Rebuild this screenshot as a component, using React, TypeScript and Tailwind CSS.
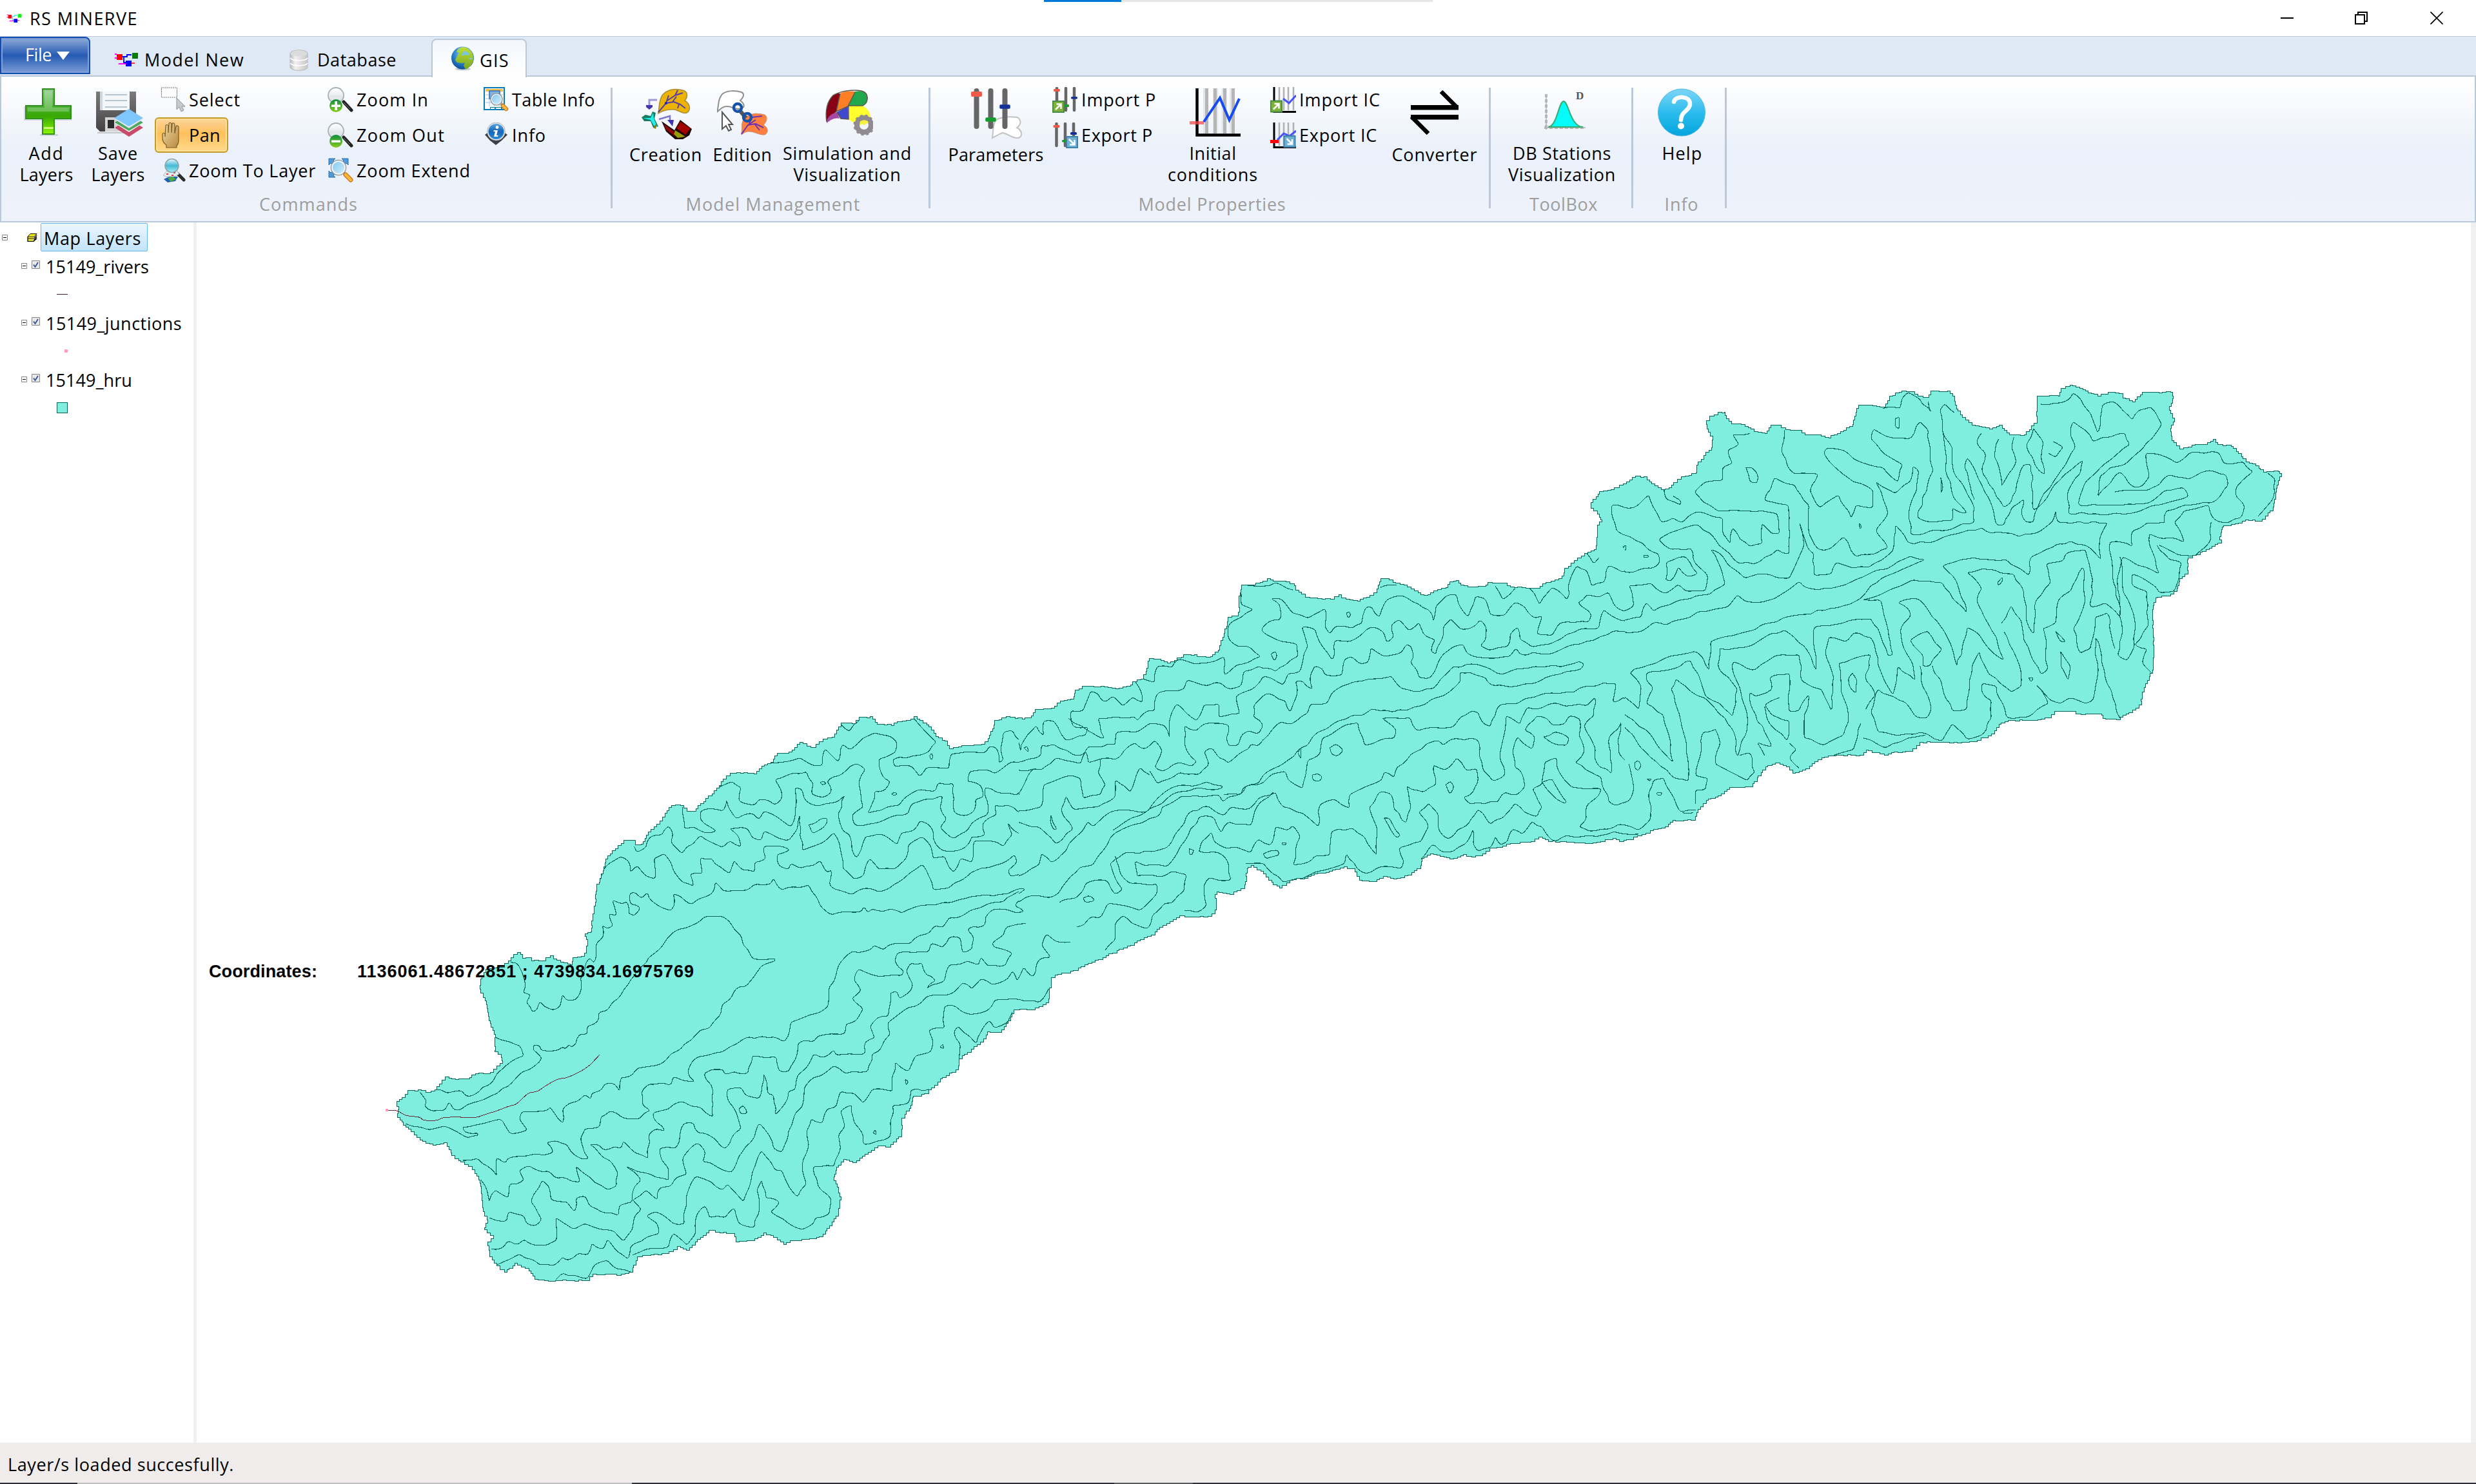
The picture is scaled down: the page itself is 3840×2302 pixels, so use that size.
import React, { useLayoutEffect, useRef } from "react";

/* ------------------------------------------------------------------ */
/* Text that is tracked to an exact advance width                      */
/* ------------------------------------------------------------------ */

function Fit({ w, children, className = "" }: { w: number; children: string; className?: string }) {
  const ref = useRef<HTMLSpanElement>(null);
  useLayoutEffect(() => {
    const el = ref.current;
    if (!el) return;
    el.style.letterSpacing = "0px";
    const natural = el.getBoundingClientRect().width;
    el.style.letterSpacing = `${(w - natural) / children.length}px`;
  }, [w, children]);
  return (
    <span ref={ref} className={`inline-block whitespace-pre ${className}`}>
      {children}
    </span>
  );
}

/* ------------------------------------------------------------------ */
/* Map geometry                                                        */
/* ------------------------------------------------------------------ */

type Pt = [number, number];
type Sheet = { ox: number; oy: number; sx: number; sy: number };

const WEST: Sheet = { ox: 560, oy: 1050, sx: 0.70153, sy: 0.61224 };
const MID: Sheet = { ox: 1500, oy: 850, sx: 0.76531, sy: 0.38265 };
const EAST: Sheet = { ox: 2400, oy: 560, sx: 0.76531, sy: 0.44643 };

function read(sheet: Sheet, text: string): Pt[] {
  return text
    .trim()
    .split(/\s+/)
    .map((pair) => {
      const [x, y] = pair.split(",").map(Number);
      return [sheet.ox + x * sheet.sx, sheet.oy + y * sheet.sy] as Pt;
    });
}

function noise(a: number, b: number) {
  const v = Math.sin(a * 12.9898 + b * 78.233) * 43758.5453;
  return v - Math.floor(v) - 0.5;
}

function roughen(pts: Pt[]): Pt[] {
  const out: Pt[] = [pts[0]];
  for (let i = 1; i < pts.length; i++) {
    const [x0, y0] = pts[i - 1];
    const [x1, y1] = pts[i];
    const len = Math.hypot(x1 - x0, y1 - y0);
    const n = Math.max(1, Math.round(len / 11));
    for (let k = 1; k < n; k++) {
      const t = k / n;
      const d = noise(x0 + k * 3, y1 + k) * 5;
      out.push([x0 + (x1 - x0) * t - ((y1 - y0) / len) * d, y0 + (y1 - y0) * t + ((x1 - x0) / len) * d]);
    }
    out.push([x1, y1]);
  }
  return out;
}

function curve(pts: Pt[]): string {
  const f = (n: number) => n.toFixed(1);
  let d = `M${f(pts[0][0])} ${f(pts[0][1])}`;
  for (let i = 1; i < pts.length - 1; i++) {
    const [px, py] = pts[i - 1];
    const [x, y] = pts[i];
    const [nx, ny] = pts[i + 1];
    const ax = x + (px - x) * 0.4;
    const ay = y + (py - y) * 0.4;
    const bx = x + (nx - x) * 0.4;
    const by = y + (ny - y) * 0.4;
    d += `L${f(ax)} ${f(ay)}Q${f(x)} ${f(y)} ${f(bx)} ${f(by)}`;
  }
  const last = pts[pts.length - 1];
  return `${d}L${f(last[0])} ${f(last[1])}`;
}

function stairs(pts: Pt[]): string {
  let d = `M${Math.round(pts[0][0])} ${Math.round(pts[0][1])}`;
  const all = [...pts, pts[0]];
  for (let i = 1; i < all.length; i++) {
    const [x0, y0] = all[i - 1];
    const [x1, y1] = all[i];
    const n = Math.max(1, Math.round(Math.hypot(x1 - x0, y1 - y0) / 6));
    for (let k = 1; k <= n; k++) {
      const j = k < n ? noise(x0 + k, y0) * 2 : 0;
      d += `H${Math.round(x0 + ((x1 - x0) * k) / n + j)}V${Math.round(y0 + ((y1 - y0) * k) / n + j)}`;
    }
  }
  return `${d}Z`;
}

const OUTLINE: [Sheet, string][] = [
  [WEST, "80,1105 82,1088 78,1075 90,1065 103,1047 125,1046 143,1052 163,1045 172,1030 185,1012 200,1018 232,1018 252,1005 285,1002 300,985 312,972 310,955 295,945 297,905 285,870 278,830 270,800 264,790 263,765 275,740 310,735 325,718 345,698 352,703 357,712 372,710 376,718 400,718 418,706 425,714 440,722 462,728 468,710 486,708 498,690 500,665 495,650 508,645 512,600 518,570 520,525 528,510 535,490 540,460 555,440 580,414 600,414 606,424 618,423 630,400 640,385 660,365 672,345 685,325 705,325 720,340 735,340 750,320 780,288 800,258 815,243 845,242 868,245 885,225 905,215 920,192 945,190 970,165 985,175 1000,178 1020,156 1040,152 1060,116 1085,118 1100,102 1125,100 1140,120 1172,122 1185,112 1205,110 1222,100 1235,110 1255,125 1270,150 1290,162 1300,182 1320,176 1372,170 1385,155 1395,130 1400,110 1425,100 1445,105 1475,103 1490,82 1525,78 1545,60 1568,55"],
  [MID, "215,600 218,575 232,560 270,560 300,570 330,555 335,540 352,530 362,500 368,446 385,450 405,464 420,455 438,432 460,432 465,440 492,440 508,412 514,375 520,345 528,280 545,275 552,240 550,210 555,150 580,150 598,132 608,122 620,132 645,135 662,152 665,170 685,198 710,205 735,207 752,188 758,202 790,215 815,190 830,165 838,122 855,128 868,142 885,150 905,172 925,192 945,172 970,160 978,135 990,130 1000,150 1020,158 1045,155 1055,138 1085,142 1100,158 1155,162 1165,145 1190,128 1205,112 1210,80 1230,50 1250,20 1270,5"],
  [EAST, "98,640 100,600 100,570 110,550 100,520 88,505 88,490 98,470 105,452 135,440 145,430 160,418 178,398 195,402 210,425 230,445 245,440 255,420 270,402 300,388 305,350 320,315 332,300 335,260 325,235 322,205 328,190 345,178 358,178 362,200 372,218 392,220 412,235 418,245 440,250 452,222 465,222 482,238 508,240 522,256 545,255 570,266 580,255 600,240 618,220 622,190 630,152 650,152 680,160 692,122 718,102 735,106 750,122 768,126 776,103 810,103 825,130 828,165 840,195 860,222 895,235 915,222 925,240 935,255 965,256 980,225 992,205 992,120 1035,120 1040,95 1058,83 1085,98 1095,110 1115,120 1135,108 1158,112 1165,128 1185,142 1205,108 1262,108 1268,130 1260,170 1270,210 1262,245 1265,275 1280,305 1305,292 1330,288 1348,270 1358,290 1385,295 1400,320 1415,350 1435,362 1450,385 1480,382 1487,400 1480,430 1475,480 1470,520 1448,555 1420,550 1400,565 1370,575 1362,620 1365,632 1340,655 1315,675 1298,690 1297,740 1280,765 1275,800 1262,815 1235,822 1228,850 1225,900 1228,1000 1225,1085 1215,1120 1205,1160 1203,1195 1185,1220 1160,1245 1130,1240 1122,1225 1080,1225 1070,1216 1035,1217 1020,1238 1000,1246 940,1248 918,1260 905,1295 870,1322 830,1324 760,1324 740,1355 710,1358 690,1368 650,1350 640,1368 575,1370 555,1385 530,1415 502,1432 490,1410 470,1395 445,1408 432,1440 415,1478 375,1480 345,1515 325,1525 305,1568"],
  [MID, "1475,1103 1435,1103 1420,1130 1400,1140 1375,1160 1350,1180 1330,1190 1315,1175 1275,1195 1245,1195 1185,1188 1165,1170 1150,1190 1120,1197 1100,1200 1085,1212 1065,1215 1050,1240 1030,1253 1012,1242 985,1260 965,1250 945,1240 925,1258 918,1300 900,1325 870,1340 850,1330 830,1352 800,1345 785,1300 770,1292 740,1310 710,1320 690,1338 660,1345 638,1376 620,1355 600,1310 580,1285 568,1300 562,1380 540,1403 510,1392 502,1420 505,1465 495,1492 455,1496 435,1490 410,1520 390,1545 380,1568"],
  [WEST, "1568,750 1540,755 1525,765 1520,825 1490,842 1445,842 1435,870 1415,900 1390,898 1375,925 1340,955 1322,972 1320,995 1285,1018 1255,1055 1220,1065 1212,1100 1195,1125 1195,1165 1170,1190 1150,1188 1120,1208 1095,1230 1072,1222 1050,1250 1045,1275 1055,1300 1060,1325 1055,1365 1040,1390 1020,1418 990,1425 955,1428 940,1437 920,1420 895,1408 870,1428 835,1430 825,1410 775,1402 750,1425 725,1452 705,1443 680,1460 640,1465 612,1468 600,1508 575,1515 520,1512 505,1528 420,1530 390,1525 370,1498 345,1485 322,1508 300,1485 283,1460 280,1430 292,1415 272,1395 280,1375 270,1345 265,1290 260,1265 245,1240 220,1225 200,1205 190,1180 165,1185 135,1172 110,1145 98,1135 85,1115"],
];

const WEST_LINES = [
  "295,912 310,920 330,925 352,935 360,960 335,972 320,985 300,1005 292,1025 268,1040 262,1050 245,1062 232,1062 222,1048 205,1050 190,1055 175,1045 160,1047",
  "130,1052 145,1075 140,1088 155,1100 185,1098 195,1076 205,1097 220,1097 250,1078 270,1072 290,1060 325,1038 340,1020 358,1000 372,995 385,985 400,968 392,955 380,945 382,932 395,935 398,946 435,946 445,938 452,942 460,932 465,938 475,930 485,905 500,905 500,885 525,870 525,850 545,845 555,825 575,805 590,780 605,755 630,725 635,712 660,690 675,665 700,640 735,628 760,607 800,607 815,620 825,640 840,655 845,680 855,690 865,714 915,714 915,720 900,725 885,732 865,765 850,785 835,785 820,810 798,830 795,855 770,890 750,895 730,920 705,945 685,955 675,970 650,985 610,992 600,1008 575,1015 572,1050 560,1030 540,1030 530,1048 510,1055 508,1070 495,1058 480,1075 460,1080 445,1095 447,1130 430,1110 418,1090 412,1098 355,1102 350,1120 368,1148 350,1155 330,1158 320,1140 310,1120 290,1125 270,1132 250,1136 225,1140 228,1152 258,1156 258,1162 235,1168 220,1158 205,1148 185,1138 150,1148 130,1140 98,1132",
  "330,723 345,725 355,745 362,770 358,800 375,805 365,825 378,848 388,845 395,822 405,835 425,845 440,835 445,805 455,820 475,818 488,785 485,760 505,712 515,725 520,690 520,675 535,660 533,630 545,638 557,630 548,600 565,605 555,565 575,575 588,570 592,600 605,605 618,585 595,575 593,550 605,545 620,562 633,546 645,570 660,582 685,592 692,580 690,550 705,555 730,577 745,563 775,550 783,520 800,542 855,540 870,525 905,525 912,510 930,540 955,532 990,527 1005,555 1015,580 1040,603 1055,597 1105,595 1112,582 1120,597 1130,588 1140,592 1185,592 1195,598 1220,585 1270,578 1320,565 1365,555 1430,550 1450,537 1465,540 1440,553 1420,570 1385,575 1350,590 1330,605 1300,610 1285,635 1268,630 1255,650 1235,655 1215,675 1165,680 1155,692 1135,680 1115,695 1085,695 1070,710 1055,730 1050,755 1035,785 1032,835 1010,852 980,862 950,875 948,892 935,925 915,912 855,912 830,930 800,950 760,960 735,970 727,985 725,1012 738,1025 710,1022 690,1012 685,1035 665,1028 635,1032 620,1050 622,1085 640,1098 615,1120 590,1120 565,1105 550,1100 530,1115 528,1140 495,1145 485,1170 490,1190 503,1220 490,1222 465,1205 455,1185 430,1175 410,1180 425,1205 405,1212 385,1208 350,1215 325,1220 318,1232 300,1218 300,1265 280,1240 258,1220 225,1225",
  "265,1275 275,1290 283,1330 297,1300 325,1320 328,1285 345,1285 360,1275 350,1250 370,1238 385,1248 415,1252 430,1270 450,1268 465,1278 485,1280 475,1240 495,1260 515,1280 545,1300 565,1290 568,1258 550,1225 525,1205 505,1185 525,1185 535,1198 560,1190 575,1195 580,1175 595,1195 635,1220 635,1160 650,1145 672,1150 655,1130 645,1105 680,1095 690,1083 710,1075 730,1088 750,1090 778,1115 778,1050 758,1005 775,995 800,995 805,1008 825,1000 835,1005 855,1005 865,960 895,965 918,962 925,1000 945,1000 960,970 965,930 980,920 1000,925 1010,910 1050,905 1070,905 1072,880 1095,870 1110,840 1085,815 1105,795 1090,770 1100,740 1130,755 1195,757 1200,745 1180,720 1185,700 1255,697 1260,675 1285,685 1300,660 1325,662 1330,700 1350,690 1355,660 1340,640 1380,628 1380,608 1395,590 1465,595 1460,588 1445,580 1455,565 1480,555",
  "283,1370 300,1378 322,1380 325,1355 360,1365 365,1385 385,1392 400,1375 375,1330 400,1275 415,1290 420,1325 455,1330 472,1355 475,1320 495,1315 505,1340 535,1358 570,1365 570,1340 600,1330 605,1290 620,1275 605,1255 585,1240 640,1260 680,1275 680,1245 665,1225 660,1195 695,1195 705,1160 715,1130 735,1130 745,1155 775,1165 805,1195 820,1165 840,1145 830,1105 812,1075 810,1045 840,1040 850,1060 880,1068 890,1005 898,1030 898,1055 912,1060 915,1110 935,1085 945,1050 960,1045 965,1010 985,990 1000,955 1020,965 1045,945 1050,958 1080,955 1115,955 1112,930 1135,915 1125,885 1140,865 1165,860 1170,800 1185,797 1190,815 1205,805 1220,780 1205,745 1215,725 1240,725 1250,755 1270,770 1250,790 1290,770 1300,730 1340,720 1365,730 1370,710 1385,732 1425,730 1440,700 1400,685 1395,675 1420,655 1425,635 1470,625",
  "288,1450 315,1445 325,1428 345,1440 360,1425 385,1440 410,1440 432,1428 430,1370 470,1400 495,1385 530,1400 560,1405 580,1430 600,1400 605,1365 620,1350 600,1325 630,1300 655,1325 660,1295 685,1290 695,1270 720,1260 710,1220 745,1180 760,1200 755,1228 785,1240 820,1255 835,1215 850,1190 870,1165 880,1130 895,1150 912,1195 930,1205 945,1150 960,1105 975,1090 980,1040 1000,1015 1030,1000 1045,985 1070,1005 1120,1000 1130,955 1150,940 1170,905 1165,875 1200,845 1225,835 1250,810 1310,800 1330,775 1350,790 1370,765 1395,780 1430,765 1440,745 1450,770 1465,735 1485,760 1500,715 1525,710 1505,680 1515,652 1535,670 1568,672",
  "300,1490 330,1475 350,1462 375,1475 395,1490 425,1492 445,1470 455,1478 480,1460 500,1465 510,1435 535,1450 545,1425 565,1455 590,1475 595,1445 630,1420 660,1410 655,1385 630,1365 650,1355 690,1385 715,1385 718,1320 740,1265 775,1280 800,1300 810,1285 845,1330 865,1255 885,1200 915,1250 930,1250 945,1290 965,1318 985,1285 975,1245 990,1185 985,1150 995,1120 1020,1130 1030,1095 1050,1090 1060,1050 1090,1055 1110,1080 1130,1045 1175,1050 1180,975 1210,1000 1225,960 1260,950 1265,925 1255,895 1290,890 1290,835 1315,835 1345,855 1385,845 1400,820 1440,815 1470,822 1500,825 1520,790",
  "430,1528 445,1510 500,1525 515,1490 545,1478 565,1500 600,1510",
  "600,1465 630,1450 680,1445 690,1410 720,1440 740,1410 740,1370 760,1340 770,1370 805,1370 825,1345 835,1385 870,1395 880,1340 875,1300 885,1275 895,1320 925,1330 905,1355 945,1385 975,1400 1000,1385 1005,1370 1035,1360 1040,1325 1010,1290 1000,1240 1045,1240 1060,1195 1055,1160 1070,1140 1060,1100 1085,1085 1090,1130 1110,1160 1110,1185 1170,1165 1175,1085 1210,1080 1215,1048 1255,1045",
  "1322,970 1325,930 1310,900 1320,885 1345,910 1360,930 1370,900 1390,870 1400,890 1430,875 1440,850",
  "835,1095 845,1085 855,1105 840,1108 835,1095",
  "1203,1020 1210,1025 1205,1035 1203,1020",
  "1280,938 1286,930 1288,942 1280,938",
  "1132,1155 1137,1147 1139,1160 1132,1155",
  "528,515 535,490 560,465 575,455 590,465 595,495 610,478 630,505 650,512 648,460 670,448 685,470 690,490 710,520 735,530 728,500 755,498 750,458 775,460 795,482 815,498 825,465 845,490 870,495 870,470 895,460 890,430 920,428 948,438 920,450 925,480 945,488 950,472 970,485 1000,478 1015,465 1030,495 1040,490 1035,525 1055,540 1085,552 1115,535 1145,545 1180,525 1215,495 1240,475 1255,505 1265,540 1300,535 1340,505 1360,490 1400,478 1430,465 1445,450 1450,470 1430,490 1435,505 1480,485",
  "604,430 610,445 630,432 640,405 665,400 680,378 690,395 685,420 710,448 720,430 740,415 750,402 785,425 800,432 815,415 840,430 835,405 815,385 855,385 865,408 885,415 890,390 925,410 945,415 965,385 970,350 975,440 1010,425 1045,395 1060,440 1065,485 1090,513 1110,505 1125,460 1140,480 1145,487 1180,487 1205,460 1210,425 1240,405 1260,430 1265,460 1290,455 1310,495 1325,460 1350,470 1355,415 1405,418 1420,430 1440,400 1430,370 1460,400",
  "710,330 715,385 735,380 760,395 785,390 750,360 750,340 785,335 800,340 808,312 820,345 830,360 865,345 880,362 890,340 920,355 950,380 960,350 960,280 975,285 980,310 1000,325 1055,315 1070,300 1055,345 1065,390 1080,400 1085,440 1095,460 1105,440 1115,405 1155,400 1185,425 1195,395 1220,390 1235,365 1260,380 1265,410 1285,440 1320,440 1345,420 1350,405 1380,400 1375,370 1405,350 1400,325 1430,325 1455,345 1470,310",
  "785,283 820,265 840,280 835,315 870,325 880,310 900,312 915,325 930,310 930,290 915,260 940,250 985,240 1000,270 995,295 1020,305 1040,290 1030,265 1070,240 1095,220 1115,235 1100,270 1105,300 1110,330 1085,350 1090,375 1140,370 1185,350 1210,345 1220,320 1245,310 1265,310 1285,300 1280,330 1295,360 1280,380 1310,410 1340,390 1350,370 1385,350 1380,280 1420,295 1450,300 1465,265",
  "905,218 940,215 970,205 1000,225 1020,225 1025,182 1055,215 1065,170 1080,185 1110,155 1135,142 1170,150 1185,165 1182,190 1145,208 1150,245 1170,265 1160,285 1135,290 1130,320 1120,345 1150,338 1190,325 1210,300 1235,285 1270,290 1275,268 1310,270 1312,345 1330,352 1355,340 1358,310 1375,305 1370,275 1340,265 1345,240 1375,235 1400,245 1420,230 1440,215 1480,215",
  "1060,118 1080,138 1100,112",
  "1222,105 1245,135 1272,165 1255,190 1220,200 1175,210 1180,228 1215,225 1235,252 1250,230 1300,232 1305,195 1345,190 1380,192 1390,175 1405,180 1410,218 1420,210 1415,175 1420,140 1440,135 1465,180",
  "990,375 1030,357 1030,370 1010,390 998,397 990,375",
  "1015,268 1022,264 1028,270 1020,274 1015,268",
  "1173,296 1180,292 1185,297 1178,301 1173,296",
  "1257,200 1262,193 1264,205 1260,210 1257,200",
];

const MID_LINES = [
  "0,1420 25,1418 40,1408 85,1405 105,1380 118,1382 95,1410 75,1435 40,1440 8,1485",
  "98,1440 120,1415 135,1408 165,1418 185,1400 210,1330 228,1295 255,1285 265,1250 285,1200 300,1155 340,1120 385,1090 395,1050 425,1020 435,1005 475,1010 510,1000 518,1030 530,1008 560,990 565,965 590,960 620,915 645,905 650,940 680,975 685,930 690,860 715,835 720,770 745,745 770,715 792,708 805,800 835,780 865,772 870,740 840,690 898,688 912,742 930,730 960,730 985,725 1000,685 1020,662 1035,665 1045,710 1060,725 1070,680 1080,635 1115,632 1130,610 1150,605 1165,592 1200,590 1230,585 1250,562 1275,560 1290,546 1315,548 1312,590 1308,625 1330,605 1355,640 1365,655 1355,570 1342,510 1350,490 1390,465 1400,462",
  "0,1320 40,1315 55,1290 80,1270 100,1240 85,1320 100,1332 130,1300 145,1285 150,1240 170,1275 190,1245 215,1180 240,1125 245,1110 255,1130 290,1070 320,1062 365,1070 375,1040 400,990 430,962 470,960 485,948 518,965 515,975 460,975 450,985 430,988 405,1015 385,1045 350,1085 320,1110 295,1145",
  "0,930 30,895 65,925 90,895 120,905 135,895 150,900 180,850 200,862 230,875 240,825 245,870 270,855 300,858 340,790 360,815 380,780 395,820 380,890 395,905 430,870 455,885 465,865 455,850 440,790 440,720 465,740 485,710 530,718 525,770 530,803 550,800 555,760 570,740 590,755 600,720 580,685 580,640 605,590 645,620 655,665 668,600 665,540 680,540 700,572 695,520 705,478 720,490 725,515 760,515 765,450 780,440 795,470 812,465 818,405 845,440 880,425 890,390 900,400 905,440 898,465 912,495 915,525 935,530 950,490 965,430 985,400 1005,390 1015,430 1045,445 1100,440 1112,405 1120,430 1185,428 1215,400 1270,375 1310,335 1330,340 1380,325",
  "370,905 385,955 430,910 470,918 490,880 480,825 495,810 510,850 530,872 545,845 570,815 575,795 590,803 610,760 635,705 655,715 690,670 695,632 730,630 738,590 760,560 800,540 850,525 860,520 868,545 880,570 905,582 945,570 960,530 985,480 1040,475 1060,490 1075,510 1100,500 1150,480 1215,475 1240,460 1250,470 1245,490 1215,500 1190,515 1160,540 1115,560 1065,558 1050,525 1030,515 1020,505 998,505 1000,540 965,600 940,615 920,640 890,660 835,660 820,652 800,680 780,678 740,715 700,765 690,800 670,820 650,860 620,895 600,920 590,955 560,970 555,1000 520,1000",
  "290,1280 320,1235 375,1232 405,1215 430,1140 455,1065 490,1048 520,1085 535,1050 570,1060 590,1015 625,990 640,1050 680,1075 712,1130 715,1040 745,1018 775,1055 775,1000 800,975 840,940 845,908 865,930 870,890 910,825 930,795 955,780 965,800 980,775 1035,778 1045,900 1065,945 1090,920 1080,830 1090,740 1092,680 1120,715 1135,645 1150,655 1180,632 1255,640 1272,605 1270,680 1250,720 1268,790 1275,870 1305,915 1300,770 1325,710",
  "290,1280 300,1340 315,1385 300,1405 285,1350 270,1345 240,1360 235,1390 220,1420 190,1430 180,1460 210,1500 180,1515 160,1495 125,1505 115,1535 80,1540",
  "345,1328 340,1270 360,1288 405,1292 425,1240 470,1090 500,1092 515,1155 530,1110 575,1125 590,1040 620,990",
  "345,1328 375,1325 400,1330 415,1310 445,1325 440,1390 415,1440 400,1440 375,1490 365,1545 345,1530 315,1490 300,1520 300,1590 280,1630",
  "300,1250 310,1320 330,1360 385,1362 385,1400 350,1470 320,1450 285,1440 270,1500 250,1495 235,1530 215,1540 210,1600 190,1640",
  "470,1230 475,1190 495,1150 500,1190 525,1218 545,1212 575,1235 590,1180 615,1205 625,1130 650,1145 660,1125 675,1170 660,1285 685,1278 705,1248 735,1245 738,1150 780,1135 805,1170 830,1245 830,1130 815,1050 835,990 860,1000 865,1060 890,1115 900,1050 890,965 925,990 950,960 945,880 970,900 992,850 1010,900 1032,895 1035,950 1025,990 1005,1010 1020,1040 1075,1030 1090,990 1115,1000 1130,970 1120,900 1110,890 1108,800 1115,765 1145,815 1150,765 1130,740 1155,680 1175,690 1185,718 1210,715 1220,680 1242,695 1240,760 1250,830 1232,870 1265,910 1285,930 1300,1030 1315,1045 1345,1030 1340,980 1350,950 1335,910 1340,870 1320,830 1318,780 1325,715",
  "470,1230 510,1235 530,1280 535,1345 510,1348 490,1335 480,1365 485,1450 465,1478 440,1470",
  "565,1280 600,1278 640,1355 690,1330 735,1300 765,1280 768,1240 790,1300 805,1320 845,1290 880,1300 885,1270 875,1215 895,1205 920,1190 935,1130 915,1070 935,1035 955,1080 955,1140 975,1180 995,1140 1015,1120 1035,1060 1060,1120 1085,1095 1110,1035 1140,1080 1155,1090 1165,1050 1145,975 1165,960 1170,870 1195,850 1195,890 1225,970 1285,975 1280,1005 1255,1045 1255,1100 1240,1130 1260,1148 1300,1140 1320,1120 1360,1145 1385,1100 1378,1010 1398,940 1420,1000 1450,1075 1475,1070 1480,1030",
  "920,1260 945,1200 960,1230 985,1230 1010,1200 1025,1140 1025,1200 1035,1230 1060,1215 1070,1170 1080,1205 1095,1190 1105,1140 1125,1160 1145,1108 1165,1130 1185,1185 1195,1188 1215,1165 1275,1170 1310,1150 1360,1160",
  "700,920 712,915 720,930 712,948 700,940 700,920",
  "735,810 748,793 763,820 750,845 738,835 735,810",
  "1168,765 1190,745 1220,770 1215,800 1190,795 1168,765",
  "450,1220 460,1225 455,1245 450,1240 450,1220",
  "600,1240 630,1225 632,1245 605,1260 600,1240",
  "970,960 980,945 987,970 978,1000 970,960",
  "235,1420 248,1408 260,1430 240,1438 235,1420",
  "616,430 625,418 628,440 622,458 616,430",
  "768,265 775,258 777,275 772,283 768,265",
  "170,1085 182,1140 175,1142 168,1110 170,1085",
  "845,1095 855,1095 878,1165 870,1175 860,1150 845,1095",
  "1165,950 1185,935 1215,1030 1210,1035 1185,1000 1165,950",
  "670,830 676,810 676,855 670,830",
  "115,810 122,805 124,828 115,810",
  "638,1195 646,1195 646,1203 638,1203 638,1195",
  "0,830 30,835 50,790 60,850 72,872 72,800 75,740 95,735 108,825 115,780 140,720 155,760 155,700 175,700 200,780 240,760 245,725 215,725 210,660 235,660 250,580 265,590 280,625 295,600 315,640 335,605 355,625 350,570 340,540",
  "95,870 125,855 150,840 150,800 175,795 215,840 235,840 245,805 300,798 302,748 345,746 370,710 400,720 410,770 410,700 425,632 465,700 480,635 510,632 510,685 552,672 545,600 580,570 600,520 640,555 650,510 675,500 680,460 690,400 678,320 705,330 720,400 740,455 745,375 775,380 800,350 820,320 845,345 850,385 865,360 860,310 875,290 895,335 915,302 925,350 948,372 940,420 950,430 960,380 965,320 980,288 1000,330 1030,315 1040,290 1052,320 1050,375 1040,395 1060,415 1095,400 1100,350 1115,320 1120,370 1145,402 1180,390 1215,350 1240,330 1280,325 1290,250 1330,297 1365,285",
  "205,690 270,770 278,770 265,690 300,685 320,690 340,685 345,700 365,660 380,660 385,590 440,570 445,535 475,555 515,548 535,572 555,560 560,500 590,480 625,500 645,475 670,440 668,390 625,370 595,330 610,300 635,290 632,225 615,205 635,205 660,265 690,285 725,245 725,320 735,350 745,318 780,325 800,305 808,240 820,240 835,280 850,210 878,192 915,228 935,250 945,298 950,235 970,195 992,190 995,225 1015,280 1030,195 1050,205 1060,270 1090,272 1110,220 1130,240 1150,285 1165,275 1155,350 1185,355 1200,305 1260,300 1265,270 1238,220 1255,190 1280,200 1300,180 1312,235 1335,258 1355,210 1342,150 1385,142",
  "355,530 380,545 385,480 415,485 430,450 460,470 490,465 520,440 522,515 545,475 595,440 575,405 550,400 530,370 530,310 580,250 555,230 555,160",
  "560,150 600,155 625,140 660,170",
  "838,160 850,150 870,150",
  "1070,155 1085,210 1110,165",
  "1140,165 1160,228 1185,160 1215,210 1225,110 1235,72 1255,90 1265,155 1290,140 1300,70 1330,100 1350,60 1370,95 1400,85 1402,20 1380,0",
  "1255,20 1270,65 1280,40",
  "0,960 15,965 15,1035 0,1075",
  "35,965 65,1000 100,1030 125,915 135,895",
  "35,965 30,1020 45,1040 60,1035 95,1070 150,1050 155,960 200,925 230,935 235,1015 270,1000 280,960 265,910 270,855",
  "75,1215 80,1180 95,1150 90,1110 145,1130 180,1200 215,1140 190,1060 200,1005 215,1060 265,1050 300,1010 300,940 330,990 350,890 370,920",
  "0,1110 30,1130 40,1070 45,1040",
  "0,1160 50,1160 60,1110 90,1110",
  "10,1255 15,1190 60,1190 75,1215",
];

const EAST_LINES = [
  "0,1018 50,985 100,965 130,940 190,940 215,908 240,918 290,890 305,870 365,855 385,812 400,835 435,838 470,815 510,765 520,785 550,795 600,780 640,750 700,710 735,678 765,690 735,712 690,745 655,780 635,825 600,850 520,880 450,910 405,940 345,965 330,975 328,1075 315,1030 300,1008 250,1025 220,1050 175,1070 168,1085",
  "0,985 30,945 60,950 95,935 115,860 150,900 190,890 200,840 215,870 240,850 260,835 330,810 360,775 350,715 330,655 350,670 375,720 400,755 440,740 490,755 505,700 520,640 510,560 525,640 540,670 540,745 575,740 585,700 620,720 650,718 700,660 705,570 730,630 770,632 830,600 880,580 900,598 940,598 955,610 1000,590 1025,555 1030,520 1035,560 1135,562 1120,610 1122,690 1100,650 1060,625 1010,655 980,680 975,745 930,690 850,688 800,712 830,770 850,875 830,840 800,770 740,760 700,790 640,830",
  "15,920 85,905 65,850 70,820 120,800 150,870 175,850 165,780 210,772 240,808 265,775 280,800 320,798 325,745 295,690 290,650 250,655 225,620 260,590 305,568 340,620 390,705 430,698 465,655 490,670 488,500 440,485 460,405 500,430 530,500 530,600 550,655 575,650 600,610 625,680 665,670 690,650 665,590 690,530 680,480 665,420 705,460 735,420 740,365 752,380 748,450 735,500 735,600 745,605 775,590 800,590 830,575 865,560 865,510 845,440 822,380 820,300 805,265 795,170 805,148 825,180",
  "55,710 90,780 115,765 130,705 160,735 215,720 228,700 225,670 180,625 140,590 130,500 175,510 205,465 215,510 230,560 255,545 275,560 300,525 355,545 355,600 370,635 375,580 390,620 410,645 435,635 435,565 455,600 470,600 465,530 390,520 345,522 315,490 298,455 320,420 355,415 355,370 375,355 365,310 388,290 375,255 410,252",
  "0,785 15,800 30,830 45,825 50,770 55,710",
  "480,240 475,300 485,360 500,392 548,392 532,450 552,510 590,465 615,545 625,500 660,510 660,450 620,420 590,380 560,320 565,303 600,310 620,340 680,370 710,420 720,360 680,320 655,270 660,235 700,268 735,270 755,210 772,240 775,330 782,380 770,430 750,545 780,560 820,555 820,510 850,530 820,460 810,400 808,330 802,250",
  "880,250 870,285 888,320 880,370 895,430 925,510 940,490 950,430 965,360 980,360 985,520 1000,500 1020,450 1060,380 1085,345 1080,390 1055,450 1055,530 1110,530 1180,530 1240,500 1300,470 1290,440 1250,450 1215,495 1150,500 1075,500 1080,465 1090,420 1110,390 1150,330 1180,290 1170,250 1125,265 1105,280 1090,240 1065,210 1060,260 1070,300 1050,360 1025,420 1000,480 985,560 970,560 960,520 965,480 940,510 925,570 910,570 900,500 880,430 850,335 845,370 865,480",
  "945,265 940,300 950,350 935,390 920,435 915,370 905,330 915,270",
  "985,235 1005,280 1000,340 1008,395 995,380 970,290 985,235",
  "1025,280 1045,300 1030,335 1015,320",
  "680,165 690,160 715,165 718,130 730,108 745,122 760,150 778,178 772,140",
  "1000,150 1050,140 1065,110 1080,130 1100,180 1115,250 1125,150 1145,140 1185,205 1200,170 1222,160 1245,220 1225,270 1195,320 1170,360 1140,370 1120,400 1115,470 1130,440 1160,385 1190,440 1205,435 1220,400 1212,320 1240,325 1275,355 1300,320 1360,318 1370,355 1410,350 1430,385 1395,440 1395,470 1412,500 1405,545 1380,562 1350,550 1340,500 1310,515 1290,520 1270,560 1290,630 1220,600 1220,640 1240,740 1195,710 1165,680 1155,750 1160,890 1130,840 1100,855 1105,760 1090,655 1050,670 1045,695 1010,705 1020,770 990,830 985,950 970,900 965,800 945,740 880,722 850,735 880,790 870,830 885,890 910,960 925,1040 900,1010 875,950 850,925 840,1000 830,1060 810,960 780,890 750,825 710,840 735,870 735,890 715,930 720,990 740,1050 745,1110 710,1060 700,1160 680,1100 665,1010 655,960 620,945 605,975 570,960 565,1030 580,1100 575,1215 555,1140 515,1110 510,1020 460,1025 420,1075 375,1045 380,1100 400,1200 405,1270 385,1375 380,1300 360,1240 330,1190 280,1130 260,1105 250,1140 270,1250 282,1330 285,1460 250,1440 200,1360 150,1260 125,1330 130,1430",
  "350,1000 400,995 440,960 480,935 520,990 545,1075 540,925 655,895 670,930 690,1025 700,1020 690,930 675,830 640,830",
  "350,1000 345,1060 385,1140 375,1235 350,1190 320,1165 310,1110 290,1040 270,1060 240,1075 200,1085 200,1110 215,1135 200,1190 235,1230 250,1330 255,1395 235,1360 210,1300 185,1270 150,1218",
  "168,1085 190,1130 185,1210 155,1165 135,1185 130,1120",
  "1140,630 1145,720 1165,930 1155,1020 1175,1040 1190,990 1190,900 1165,780 1160,680",
  "1140,630 1165,630 1185,645 1185,590 1215,562 1250,560",
  "1225,1085 1205,1050 1215,1000 1190,985 1218,920 1215,800 1185,780 1185,740 1220,770 1240,805 1270,800 1285,700 1260,690 1235,640",
  "1250,560 1255,520 1305,500 1355,485 1380,430 1375,395 1340,380 1300,410 1260,395 1240,430 1215,450 1150,455",
  "1460,390 1475,410 1470,480 1440,540",
  "1345,560 1345,620 1310,680 1280,675 1240,640",
  "1160,1240 1130,1100 1120,1000 1110,960 1115,1050 1105,1180 1090,1190 1060,1170 1040,1190 1020,1180 990,1125 1015,1190 970,1238 930,1238 915,1170 910,1130 880,1120 880,1150 900,1180 900,1240 880,1300 850,1315 820,1260 800,1320 755,1290 715,1300 670,1290 655,1220 665,1160 645,1110 655,1020 590,1050 595,1150 610,1230 600,1300 560,1335 520,1310 520,1250 530,1160 510,1215 490,1220 490,1085 450,1100 455,1140 420,1165 410,1150 415,1210 440,1290 455,1340 425,1325 440,1370",
  "1005,930 1030,910 1035,830 1060,800 1085,715 1090,830 1065,930 1080,1015 1100,1000 1110,890 1135,875 1150,1000",
  "920,910 940,850 960,900 965,970 1000,1090 1015,1070 1005,930",
  "1030,940 1050,975 1040,975 1030,940",
  "1040,1010 1060,1060 1055,1110 1040,1060 1040,1010",
  "770,940 735,970 760,1020 760,1060 775,1060 800,1000 785,980 770,940",
  "780,1060 800,1130 820,1215 850,1210 860,1060 875,1010 895,1090 940,1150 960,1130 955,1050 925,940",
  "645,1210 670,1140 690,1160 725,1185 745,1235 770,1240 778,1210 760,1130 755,1060",
  "470,1170 440,1195 455,1230 490,1250 485,1320 450,1260 440,1200",
  "340,1280 315,1290 310,1370 300,1440 325,1450 320,1490 300,1490 300,1540",
  "340,1280 350,1330 340,1400 405,1458 420,1430 410,1360 390,1370",
  "490,1328 505,1350 490,1380 510,1415",
  "640,1310 685,1345 730,1310 765,1300",
  "635,1260 620,1350 580,1370",
  "165,1400 175,1480 165,1530 130,1540 125,1490 105,1430",
  "235,1450 215,1455 205,1500 210,1568",
  "235,1450 250,1500 270,1568 300,1560",
  "177,1395 184,1388 190,1405 184,1423 177,1415 177,1395",
  "201,1452 210,1452 208,1460 201,1452",
  "222,1500 232,1500 230,1510 222,1508 222,1500",
  "705,200 713,195 713,235 705,230 705,200",
  "402,370 415,370 427,395 425,425 410,420 402,370",
  "797,405 802,440 797,460 797,405",
  "632,565 637,575 633,585 632,565",
  "153,645 160,640 158,660 153,645",
  "195,675 204,675 204,683 195,683 195,675",
  "912,770 922,750 922,765 914,780 912,770",
  "618,1085 628,1110 625,1155 615,1140 610,1100 618,1085",
  "240,760 240,700 280,680 305,740 285,750 265,715 250,765 240,760",
  "975,1100 985,1100 980,1115 975,1100",
  "248,430 235,445 240,480 270,500 270,485 255,470",
];

const RIVER =
  "55,1098 80,1098 98,1112 130,1115 138,1124 170,1124 178,1117 205,1115 255,1117 275,1108 300,1100 325,1088 343,1084 370,1053 390,1051 405,1038 435,1018 455,1016 485,1000 505,985 527,958";

const contours = (sheet: Sheet, lines: string[]) => lines.map((t) => curve(roughen(read(sheet, t)))).join("");

const basinPath = stairs(OUTLINE.flatMap(([sheet, text]) => read(sheet, text)));
const westPath = contours(WEST, WEST_LINES);
const midPath = contours(MID, MID_LINES);
const eastPath = contours(EAST, EAST_LINES);
const riverPath = curve(read(WEST, RIVER));

function BasinMap() {
  return (
    <svg className="block" width="3527" height="1893" viewBox="305 345 3527 1893" shapeRendering="crispEdges">
      <defs>
        <clipPath id="basin">
          <path d={basinPath} />
        </clipPath>
        <clipPath id="west">
          <path d="M305 345H1580V1400H1670V2238H305Z" />
        </clipPath>
        <clipPath id="mid">
          <path d="M1580 850H2520V1260H2700V1500H1670V1400H1580Z" />
        </clipPath>
        <clipPath id="east">
          <path d="M2400 345H3700V1260H2520V850H2400Z" />
        </clipPath>
      </defs>
      <path d={basinPath} fill="#7feedf" stroke="#0b6459" strokeWidth="1" />
      <g fill="none" stroke="#0b6459" strokeWidth="1.15" clipPath="url(#basin)">
        <path d={westPath} clipPath="url(#west)" />
        <path d={midPath} clipPath="url(#mid)" />
        <path d={eastPath} clipPath="url(#east)" />
      </g>
      <path d={riverPath} fill="none" stroke="#6b2733" strokeWidth="1" />
      <circle cx="600" cy="1722" r="2.5" fill="#ff9ebb" />
    </svg>
  );
}

/* ------------------------------------------------------------------ */
/* Icons                                                               */
/* ------------------------------------------------------------------ */

function Svg({ s, children, className = "" }: { s: number; children: React.ReactNode; className?: string }) {
  return (
    <svg width={s} height={s} viewBox={`0 0 ${s} ${s}`} className={`block shrink-0 ${className}`}>
      {children}
    </svg>
  );
}

function Gradients() {
  return (
    <svg width="0" height="0" className="absolute">
      <defs>
        <linearGradient id="gPlus" x1="0" y1="0" x2="0" y2="1">
          <stop offset="0" stopColor="#8ccb86" />
          <stop offset=".45" stopColor="#46ae2c" />
          <stop offset=".6" stopColor="#37a800" />
          <stop offset="1" stopColor="#8cf500" />
        </linearGradient>
        <linearGradient id="gDisk" x1="0" y1="0" x2="0" y2="1">
          <stop offset="0" stopColor="#7b7b7b" />
          <stop offset="1" stopColor="#454142" />
        </linearGradient>
        <linearGradient id="gHand" x1="0" y1="0" x2="1" y2="1">
          <stop offset="0" stopColor="#f0d9a4" />
          <stop offset="1" stopColor="#b8893f" />
        </linearGradient>
        <linearGradient id="gBadge" x1="0" y1="0" x2="0" y2="1">
          <stop offset="0" stopColor="#0d8f3c" />
          <stop offset="1" stopColor="#86cc1f" />
        </linearGradient>
        <linearGradient id="gLens" x1="0" y1="0" x2="0" y2="1">
          <stop offset="0" stopColor="#ffffff" />
          <stop offset="1" stopColor="#d5dade" />
        </linearGradient>
        <linearGradient id="gBlueLens" x1="0" y1="0" x2="1" y2="1">
          <stop offset="0" stopColor="#7cc4ee" />
          <stop offset="1" stopColor="#d8f0fc" />
        </linearGradient>
        <linearGradient id="gCyanLens" x1="0" y1="0" x2="0" y2="1">
          <stop offset="0" stopColor="#e9f8fb" />
          <stop offset=".5" stopColor="#45b9d6" />
          <stop offset="1" stopColor="#a9eef5" />
        </linearGradient>
        <radialGradient id="gGlobe" cx=".5" cy=".3" r=".75">
          <stop offset="0" stopColor="#8fd0f5" />
          <stop offset=".5" stopColor="#2e86cf" />
          <stop offset="1" stopColor="#0a4391" />
        </radialGradient>
        <linearGradient id="gLand" x1="0" y1="0" x2="0" y2="1">
          <stop offset="0" stopColor="#c0de3c" />
          <stop offset="1" stopColor="#76a81c" />
        </linearGradient>
        <linearGradient id="gDb" x1="0" y1="0" x2="1" y2="0">
          <stop offset="0" stopColor="#b9b9b9" />
          <stop offset=".3" stopColor="#f2f2f2" />
          <stop offset="1" stopColor="#c6c6c6" />
        </linearGradient>
        <linearGradient id="gHelp" x1="0" y1="0" x2="0" y2="1">
          <stop offset="0" stopColor="#7dd6f8" />
          <stop offset=".5" stopColor="#2cbcee" />
          <stop offset="1" stopColor="#05a5dd" />
        </linearGradient>
        <linearGradient id="gInfo" x1="0" y1="0" x2="0" y2="1">
          <stop offset="0" stopColor="#5aa9e8" />
          <stop offset=".5" stopColor="#1766b8" />
          <stop offset="1" stopColor="#2f8fdc" />
        </linearGradient>
      </defs>
    </svg>
  );
}

const AddLayersIcon = () => (
  <Svg s={80}>
    <path d="M2 29H76V51H2Z M27 72H55V75H27Z" fill="#9aa6ad" opacity=".35" />
    <path d="M31 2H49V28H75V48H49V72H31V48H5V28H31Z" fill="url(#gPlus)" stroke="#2e8f1f" strokeWidth="2" />
    <path d="M34 5H46V31H72V37H8V31H34Z" fill="#ffffff" opacity=".22" />
    <path d="M33 61H48V64H33Z" fill="#e2ff9a" opacity=".8" />
  </Svg>
);

const SaveLayersIcon = () => (
  <Svg s={80}>
    <path d="M4 6H66V68H10L4 62Z" fill="url(#gDisk)" />
    <path d="M6 69H60V71H6Z" fill="#c3c7ca" />
    <path d="M10 6H56V35H14Z" fill="#f4f7f9" />
    <path d="M10 6H14V35H10Z" fill="#cfd6dc" />
    <path d="M18 11H52M18 20H52M18 30H52" stroke="#b4c5d4" strokeWidth="2" />
    <path d="M18 46H50V68H18Z" fill="#d3d5d7" />
    <path d="M22 50H32V63H22Z" fill="#2d2a2b" />
    <path d="M33 62 55 48 77 62 55 76Z" fill="#c94a69" />
    <path d="M33 55 55 41 77 55 55 69Z" fill="#eef2f2" />
    <path d="M33 54 55 40 77 54 55 67Z" fill="#4ea760" />
    <path d="M33 49 55 35 77 49 55 63Z" fill="#dfeaf4" />
    <path d="M32 47 55 33 77 47 55 60Z" fill="#7ec6fb" />
  </Svg>
);

const SelectIcon = () => (
  <Svg s={40}>
    <rect x="2.5" y="1" width="24" height="15" fill="#ffffff" stroke="#444" strokeWidth="1" strokeDasharray="1.5 1.5" />
    <path d="M26 17V35L30 31L33 38L37 36L34 30H39Z" fill="#c7cacd" stroke="#8d9398" strokeWidth="1" />
  </Svg>
);

const HandIcon = () => (
  <Svg s={40}>
    <path
      d="M10 39V35C6 32 4 28 4 25V18C4 16 7 16 8 18V22L9 5C9 3 12 3 13 5V16L14 2C14 0 18 0 18 2V16L19 2C20 0 23 1 23 3V17L25 6C26 4 29 5 29 7V28C29 32 28 34 26 36V39Z"
      fill="url(#gHand)"
      stroke="#7b5a24"
      strokeWidth="1.2"
    />
  </Svg>
);

const ZoomLayerIcon = () => (
  <Svg s={40}>
    <path d="M27 24 37 34" stroke="#2b2b2b" strokeWidth="5" strokeLinecap="round" />
    <path d="M6 33 14 29H28L24 36 12 38Z" fill="#1c62b4" />
    <path d="M12 31 20 29 25 33 17 37Z" fill="#4fae3f" />
    <path d="M5 27 12 19H26L30 25 22 29H9Z" fill="#e3eef2" stroke="#9db2b8" strokeWidth=".8" />
    <g fill="#d93c2e">
      <rect x="14" y="20" width="3" height="2" />
      <rect x="21" y="22" width="3" height="2" />
      <rect x="10" y="24" width="3" height="2" />
      <rect x="18" y="26" width="3" height="2" />
    </g>
    <circle cx="18.500" cy="12" r="10.500" fill="url(#gCyanLens)" stroke="#8fa4ab" strokeWidth="1.600" />
  </Svg>
);

const ZoomGlass = ({ minus = false }: { minus?: boolean }) => (
  <Svg s={40}>
    <path d="M25 23 37 36" stroke="#222" strokeWidth="5" strokeLinecap="round" />
    <path d="M25 24 35 34" stroke="#777" strokeWidth="1" />
    <circle cx="13" cy="13" r="12" fill="url(#gLens)" stroke="#a6b0b6" strokeWidth="1.800" />
    <path d="M4 13A9 9 0 0 0 22 13Z" fill="#e3e7ea" />
    <circle cx="13" cy="29" r="10" fill="url(#gBadge)" />
    <path d={minus ? "M6 27.500H20V31H6Z" : "M6 27.500H11.300V22H15V27.500H20V31H15V36H11.300V31H6Z"} fill="#fff" />
  </Svg>
);
const ZoomInIcon = () => <ZoomGlass />;
const ZoomOutIcon = () => <ZoomGlass minus />;

const ZoomExtendIcon = () => (
  <Svg s={40}>
    <g fill="#4f9bd9" stroke="#2a6fae" strokeWidth="1">
      <path d="M2 1H12L9 4 13 8 9 11 5 8 2 11Z" />
      <path d="M32 1H22L25 4 21 8 25 11 29 8 32 11Z" />
      <path d="M2 30H12L9 27 13 23 9 20 5 23 2 20Z" />
    </g>
    <circle cx="17" cy="15" r="11.500" fill="url(#gBlueLens)" stroke="#8d9196" strokeWidth="1.500" />
    <circle cx="17" cy="15" r="10" fill="none" stroke="#f3f5f7" strokeWidth="2" />
    <path d="M25 23 28 26" stroke="#999" strokeWidth="4" />
    <path d="M28 26 36 34" stroke="#c6761a" strokeWidth="7" strokeLinecap="round" />
    <path d="M28 26 36 34" stroke="#ffb73a" strokeWidth="4.500" strokeLinecap="round" />
  </Svg>
);

const TableInfoIcon = () => (
  <Svg s={40}>
    <rect x="2" y="1" width="31" height="34" fill="#ffffff" stroke="#0a7cb5" strokeWidth="2" />
    <rect x="4" y="3" width="27" height="4" fill="#f5bf4d" />
    <path d="M4 12H31M4 18H31M4 24H31M10 7V30M18 7V30M25 7V30" stroke="#b9dcef" strokeWidth="1.500" />
    <rect x="10" y="6" width="16" height="12" fill="#7fb2e2" stroke="#2f6cb0" strokeWidth="1.500" />
    <path d="M11 33H30" stroke="#0a7cb5" strokeWidth="4" />
    <path d="M12 33H18M20 33H28" stroke="#ffffff" strokeWidth="2" />
    <circle cx="21" cy="19" r="9" fill="url(#gBlueLens)" stroke="#8d9196" strokeWidth="1.500" />
    <circle cx="21" cy="19" r="7.800" fill="none" stroke="#eef3f6" strokeWidth="1.200" />
    <path d="M28 26 30 28" stroke="#999" strokeWidth="4" />
    <path d="M31 29 36 34" stroke="#c6761a" strokeWidth="6.500" strokeLinecap="round" />
    <path d="M31 29 36 34" stroke="#ffb73a" strokeWidth="4" strokeLinecap="round" />
  </Svg>
);

const InfoIcon = () => (
  <Svg s={40}>
    <path d="M3 19 20 7 38 19 29 28 20 35 11 28Z" fill="#3a3f45" />
    <circle cx="20.500" cy="14" r="13" fill="url(#gInfo)" stroke="#dfe3e6" strokeWidth="2" />
    <circle cx="20.500" cy="14" r="14" fill="none" stroke="#8b9095" strokeWidth=".6" />
    <circle cx="22" cy="7.500" r="2.400" fill="#fff" />
    <path d="M17 12H23L21 20H24L23 22H17L19 14H16Z" fill="#fff" />
  </Svg>
);

const CreationIcon = () => (
  <Svg s={80}>
    <path d="M26 38C28 30 26 22 32 12C38 4 50 0 64 4C72 6 72 14 67 20C74 24 78 34 70 39C62 42 56 32 46 34C38 34 32 36 26 40Z" fill="#ecb400" stroke="#a98c3a" strokeWidth="1.500" />
    <path d="M26 38 38 24 50 22 60 26 68 32M38 24 42 12M40 20 52 12 64 8M52 12 56 4M48 22 54 14M58 26 56 32" fill="none" stroke="#5a3fa0" strokeWidth="2" />
    <circle cx="38" cy="24" r="2" fill="#1c1ccf" />
    <path d="M24 19H12V28" fill="none" stroke="#9f9ad6" strokeWidth="3" />
    <path d="M7 27H17V30L12 34 7 30Z" fill="#3f34b4" />
    <path d="M0 46 6 42 14 44 17 37 22 39 20 48 26 60 18 62 14 52 4 52Z" fill="#177d62" />
    <path d="M2 47H14L18 39 19 48 24 60 19 59 14 50Z" fill="#1ff0ee" />
    <path d="M18 62 24 54 22 64Z" fill="#8a7a1a" />
    <path d="M27 49 44 44V52" fill="none" stroke="#7f78cc" strokeWidth="2.500" />
    <path d="M40 50H50L48 60Z" fill="#3f34b4" />
    <path d="M31 52 51 66 60 50 78 64 74 74 64 80 52 80 38 68Z" fill="#1c0606" />
    <path d="M34 56 50 68 50 74 38 65Z" fill="#8f0505" />
    <path d="M60 53 76 63 68 73 54 63Z" fill="#a00000" />
    <path d="M52 66 68 76 56 78 50 72Z" fill="#979a00" />
  </Svg>
);

const EditionIcon = () => (
  <Svg s={80}>
    <path d="M1 34C3 22 2 18 8 10C16 4 28 4 38 7C44 10 40 16 36 20C42 24 44 30 38 32C30 36 24 29 16 29C8 29 6 33 1 37Z" fill="#ffffff" stroke="#8f8f8f" strokeWidth="2" />
    <path d="M38 70C40 60 36 54 44 46C54 38 66 40 74 42C80 46 76 54 72 58C80 62 80 70 74 73C66 74 58 68 50 68C44 68 42 70 38 73Z" fill="#ff8040" stroke="#c98a6a" strokeWidth="1" />
    <path d="M38 72 48 58 60 56 72 62M50 56 54 46 70 44M58 56 66 66M48 58 60 50" fill="none" stroke="#6b35b0" strokeWidth="2" />
    <path d="M35 35 45 47" stroke="#555" strokeWidth="6" />
    <circle cx="32" cy="31" r="6" fill="none" stroke="#1652a8" strokeWidth="4.500" />
    <circle cx="47" cy="46" r="6" fill="none" stroke="#1652a8" strokeWidth="4.500" />
    <path d="M8 38V64L14 59 18 67 22 65 18 57H24Z" fill="#fff" stroke="#555" strokeWidth="2" />
  </Svg>
);

const SimulationIcon = () => (
  <Svg s={80}>
    <path d="M8 53C6 38 8 22 18 12C24 8 26 9 29 9L23 37Z" fill="#880015" />
    <path d="M29 9C38 4 46 6 52 6L44 26 38 32 23 37Z" fill="#ff7f27" />
    <path d="M52 6C64 4 72 6 71 16C72 24 68 27 62 28H42Z" fill="#22a84c" />
    <path d="M24 38 41 29 42 49 30 48Z" fill="#3f48cc" />
    <path d="M42 28H64C72 32 76 40 76 46L58 60 42 49Z" fill="#ffff2e" />
    <path d="M8 53C10 44 16 40 24 38L28 48C18 46 12 52 8 55Z" fill="#a349a4" />
    <path d="M8 53C6 38 8 22 18 12C32 4 50 3 62 5C74 8 74 22 64 28M29 9 23 37 41 29 52 7M41 28H64M42 28V49L30 48 24 38" fill="none" stroke="#5d5750" strokeWidth="1.500" />
    <circle cx="66" cy="58" r="11" fill="none" stroke="#8f8b90" strokeWidth="8" />
    <circle cx="66" cy="58" r="15" fill="none" stroke="#8f8b90" strokeWidth="3" strokeDasharray="4 4" />
    <path d="M59 54C62 48 72 50 73 54L66 58Z" fill="#f6f03a" />
  </Svg>
);

const ParametersIcon = () => (
  <Svg s={80}>
    <path d="M34 78C36 66 34 58 40 50C50 44 64 45 73 46C80 51 78 58 72 62C80 66 82 76 74 78C64 79 60 72 50 70C44 72 40 75 34 78Z" fill="#ffffff" stroke="#c2c2c2" strokeWidth="2" />
    <path d="M9.500 5V60M31.500 5V60M53.500 5V60" stroke="#666" strokeWidth="8" strokeLinecap="round" />
    <path d="M3 8H16V12H3Z" fill="#ee5b4b" stroke="#ee5b4b" strokeWidth="4" strokeLinejoin="round" />
    <path d="M25 48H38V51H25Z" fill="#149c2c" stroke="#149c2c" strokeWidth="3.500" strokeLinejoin="round" />
    <path d="M47 28H60V31H47Z" fill="#122f9c" stroke="#122f9c" strokeWidth="3.500" strokeLinejoin="round" />
  </Svg>
);

const Arrow = ({ x, y, up }: { x: number; y: number; up: boolean }) => (
  <g>
    <rect x={x + 1} y={y + 1} width="17" height="17" fill={up ? "#7fb23a" : "#6fb0d3"} stroke={up ? "#4c8c4a" : "#3f83ad"} strokeWidth="2" />
    <path
      d={
        up
          ? `M${x + 5} ${y + 14}L${x + 12} ${y + 7}M${x + 6.5} ${y + 5.5}H${x + 13.5}V${y + 13}`
          : `M${x + 5} ${y + 5}L${x + 12} ${y + 12}M${x + 6} ${y + 13.5}H${x + 13.5}V${y + 6}`
      }
      fill="none"
      stroke="#fff"
      strokeWidth="2.500"
    />
  </g>
);

const ImportPIcon = () => (
  <Svg s={40}>
    <path d="M7 2V36M21 2V36M34 2V36" stroke="#666" strokeWidth="4.500" strokeLinecap="round" />
    <rect x="2" y="3" width="10" height="4" rx="1.5" fill="#ee5b4b" />
    <rect x="17" y="27" width="9" height="4" rx="1.5" fill="#149c2c" />
    <rect x="29" y="15" width="10" height="3.5" rx="1.5" fill="#122f9c" />
    <Arrow x={0} y={21} up />
  </Svg>
);

const ExportPIcon = () => (
  <Svg s={40}>
    <path d="M6.500 2V36M20 2V36M33 2V36" stroke="#666" strokeWidth="4.500" strokeLinecap="round" />
    <rect x="1.5" y="4" width="10" height="4" rx="1.5" fill="#ee5b4b" />
    <rect x="15" y="27" width="9" height="3.5" rx="1.5" fill="#149c2c" />
    <rect x="28" y="15" width="10" height="4" rx="1.5" fill="#122f9c" />
    <Arrow x={21} y={21} up={false} />
  </Svg>
);

const InitialIcon = () => (
  <Svg s={80}>
    <path d="M26 1V71M41 1V71M54.500 1V71M67 1V71" stroke="#e3e6ea" strokeWidth="8" />
    <path d="M27.500 1V71M40.500 1V71M55.500 1V71M68.500 1V71" stroke="#b5b5b5" strokeWidth="5" />
    <path d="M12.500 1V73.500H80" fill="none" stroke="#000" strokeWidth="4.500" />
    <path d="M1 54.500H23" stroke="#ff4a4a" strokeOpacity=".75" strokeWidth="5" />
    <path d="M23 53 48 16 62.500 50 78 17" fill="none" stroke="#164bf2" strokeWidth="4" />
  </Svg>
);

const ImportICIcon = () => (
  <Svg s={40}>
    <path d="M14 0V36M21 0V36M28 0V36M36 0V36" stroke="#b0b0b0" strokeWidth="2.500" />
    <path d="M6 0V38.500H40" fill="none" stroke="#000" strokeWidth="3" />
    <path d="M20 18 29 25 40 13" fill="none" stroke="#4552ff" strokeWidth="3" />
    <Arrow x={0} y={20.5} up />
  </Svg>
);

const ExportICIcon = () => (
  <Svg s={40}>
    <path d="M14 0V36M21 0V36M28 0V36M36 0V36" stroke="#b0b0b0" strokeWidth="2.500" />
    <path d="M6 0V38.500H40" fill="none" stroke="#000" strokeWidth="3" />
    <path d="M11 27 21 17 30 21 40 13" fill="none" stroke="#4552ff" strokeWidth="3" />
    <path d="M0 29.500H13" stroke="#ff0000" strokeWidth="5" />
    <Arrow x={20.5} y={20} up={false} />
  </Svg>
);

const ConverterIcon = () => (
  <Svg s={80}>
    <path d="M3 27H77V34.500H3Z M3 42H77V49.500H3Z" fill="#000" />
    <path d="M50 6 74 30M4 45 30 71" stroke="#000" strokeWidth="6.500" />
  </Svg>
);

const StationsIcon = () => (
  <Svg s={80}>
    <path d="M15 10V65M12 62H76" fill="none" stroke="#b4b6b8" strokeWidth="4" strokeDasharray="5 3" />
    <path d="M15 10V65M12 62H76" fill="none" stroke="#b4b6b8" strokeWidth="1.500" />
    <path d="M18 61C32 60 34 22 42 21C50 22 52 60 72 61Z" fill="#05fafa" stroke="#3dab70" strokeWidth="2" />
    <text x="61" y="18" className="font-['Liberation_Serif']" fontSize="17" fontWeight="700" fill="#555">
      D
    </text>
  </Svg>
);

const HelpIcon = () => (
  <Svg s={80}>
    <circle cx="39" cy="38.500" r="36.500" fill="url(#gHelp)" stroke="#4ab8e0" strokeWidth="1" />
    <path d="M27 22C29 12 52 12 52 25C52 36 38 36 38 50" fill="none" stroke="#ffffff" strokeWidth="6.500" strokeLinecap="round" />
    <circle cx="38" cy="59.500" r="5" fill="#fff" />
  </Svg>
);

const ModelIcon = ({ bright = false }: { bright?: boolean }) => (
  <svg width={bright ? 24 : 38} height={bright ? 14 : 22} viewBox="0 0 38 22" className="block shrink-0">
    <path d="M1 3H4M1 9H4" stroke="#f0f" strokeWidth="2" />
    <path d="M12 7H20V4H27M15 7V16H18" fill="none" stroke={bright ? "#4de0e6" : "#0000ff"} strokeWidth="1.800" />
    <path d="M7 18H18" stroke="#f0f" strokeWidth="2" />
    <path d="M27 17H32" stroke="#ff3333" strokeWidth="2" />
    <rect x="4" y="3" width="9" height="9" fill="#ff0000" />
    <rect x="28" y="1" width="9" height="9" fill={bright ? "#10ef10" : "#008000"} />
    <rect x="18" y="13" width="9" height="9" fill="#0000ff" />
  </svg>
);

const DatabaseIcon = () => (
  <svg width="29" height="33" viewBox="0 0 29 33" className="block shrink-0">
    <path d="M1 6C1 -1 28 -1 28 6V27C28 34 1 34 1 27Z" fill="url(#gDb)" stroke="#b5b5b5" strokeWidth="1" />
    <ellipse cx="14.500" cy="6" rx="13" ry="4.500" fill="#dcdcdc" />
    <path d="M1 13C4 18 25 18 28 13M1 21C4 26 25 26 28 21" fill="none" stroke="#ffffff" strokeWidth="1.500" />
  </svg>
);

const GlobeIcon = () => (
  <svg width="37" height="38" viewBox="0 0 37 38" className="block shrink-0">
    <ellipse cx="19" cy="35" rx="12" ry="2.500" fill="#8f9aa5" opacity=".5" />
    <circle cx="18.500" cy="18" r="17.500" fill="url(#gGlobe)" />
    <path d="M12 3 18 1C28 1 36 9 35.500 20C34 28 28 34 23 35.500L20 30 22 25 18 26 10 25 7 21 10 15 13 10 9 8Z" fill="url(#gLand)" />
    <path d="M18 9 23 7 29 11 28 14 22 13 17 15Z M12 4 15 3 14 7Z M28 18H33V20H28Z" fill="#7cc4e0" />
  </svg>
);

/* ------------------------------------------------------------------ */
/* Ribbon                                                              */
/* ------------------------------------------------------------------ */

function Big({ icon, lines, width, low = false, nudge = "" }: { icon: React.ReactNode; lines: [string, number][]; width: string; low?: boolean; nudge?: string }) {
  return (
    <div className={`flex flex-col items-center pt-[17px] ${width}`}>
      <div className={nudge}>{icon}</div>
      <div className={`flex flex-col items-center leading-[33px] ${low ? "mt-[7px]" : "mt-[5px]"}`}>
        {lines.map(([t, w]) => (
          <Fit key={t} w={w}>
            {t}
          </Fit>
        ))}
      </div>
    </div>
  );
}

function Small({ icon, text, w, active = false }: { icon: React.ReactNode; text: string; w: number; active?: boolean }) {
  return (
    <div
      className={`flex h-[55px] items-center self-start gap-[5px] rounded-[6px] border-2 pl-[6px] pr-[10px] ${
        active
          ? "border-[#c29b29] bg-linear-to-b from-[#fcd49b] via-[#fec05a] via-45% to-[#ffd98a] shadow-[inset_0_0_0_2px_#ffdf9a]"
          : "border-transparent"
      }`}
    >
      {icon}
      <Fit w={w} className="leading-[36px]">
        {text}
      </Fit>
    </div>
  );
}

function Column({ width, children }: { width: string; children: React.ReactNode }) {
  return <div className={`flex flex-col pt-[8px] ${width}`}>{children}</div>;
}

function Group({ width, title, tw, pad, children }: { width: string; title: string; tw: number; pad: string; children: React.ReactNode }) {
  return (
    <div className={`relative flex h-full shrink-0 flex-col ${width}`}>
      <div className={`flex h-[181px] ${pad}`}>{children}</div>
      <div className="flex justify-center pl-[5px] leading-[34px] text-[#9d9d9d]">
        <Fit w={tw}>{title}</Fit>
      </div>
      <div className="absolute right-0 top-[17px] h-[187px] w-[3px] bg-[#b9c8da]" />
    </div>
  );
}

/* ------------------------------------------------------------------ */
/* Layer tree                                                          */
/* ------------------------------------------------------------------ */

const Expander = () => (
  <svg width="9" height="9" viewBox="0 0 9 9" className="block shrink-0">
    <path d="M.5 .5H8.500V8.500H.5Z" fill="#fff" stroke="#848484" />
    <path d="M2 4.500H7" stroke="#000" />
  </svg>
);

const Check = () => (
  <svg width="13" height="13" viewBox="0 0 13 13" className="mb-[3px] block shrink-0">
    <path d="M.5 .5H12.500V12.500H.5Z" fill="#e9e9e9" stroke="#848484" />
    <path d="M3 6.500 5.500 10 10 3" fill="none" stroke="#3d5a99" strokeWidth="2" />
  </svg>
);

function LayerRow({ name, w, children }: { name: string; w: number; children: React.ReactNode }) {
  return (
    <>
      <div className="flex h-[44px] items-center pl-[33px]">
        <Expander />
        <div className="w-[7px]" />
        <Check />
        <Fit w={w} className="ml-[9px] mt-[3px] leading-[40px]">
          {name}
        </Fit>
      </div>
      <div className="flex h-[44px] items-center pl-[88px]">{children}</div>
    </>
  );
}

/* ------------------------------------------------------------------ */
/* Window                                                              */
/* ------------------------------------------------------------------ */

export default function App() {
  return (
    <div className="flex h-[2302px] w-[3840px] flex-col overflow-hidden bg-white font-['Open_Sans','Noto_Sans',sans-serif] text-[27px] text-black">
      <Gradients />

      <header className="relative flex h-[56px] shrink-0 items-center">
        <div className="absolute left-[1619px] top-0 flex h-[3px] w-[603px] bg-[#e6e6e6]">
          <div className="h-full w-[120px] bg-[#0078d7]" />
        </div>
        <div className="ml-[10px]">
          <ModelIcon bright />
        </div>
        <Fit w={168} className="ml-[12px] mt-px leading-[40px]">
          RS MINERVE
        </Fit>
        <svg width="20" height="20" viewBox="0 0 20 20" className="ml-auto mr-[95px]">
          <path d="M0 10H20" stroke="#000" strokeWidth="2" />
        </svg>
        <svg width="20" height="20" viewBox="0 0 20 20" className="mr-[97px]">
          <path d="M1 5H15V19H1Z M5 5V1H19V15H15" fill="none" stroke="#000" strokeWidth="2" />
        </svg>
        <svg width="20" height="20" viewBox="0 0 20 20" className="mr-[51px]">
          <path d="M.5 .5 19.500 19.500M19.500 .5 .5 19.500" stroke="#000" strokeWidth="1.700" />
        </svg>
      </header>

      <nav className="flex h-[61px] shrink-0 border-t border-[#b9c8da] bg-[#dfe9f5]">
        <div className="flex h-[58px] w-[140px] items-center gap-[8px] rounded-tr-[8px] border-2 border-[#124db0] bg-linear-to-b from-[#8fabd8] from-0% via-[#2459b3] via-50% to-[#7b9dd4] to-100% pl-[37px] text-white shadow-[inset_0_0_0_2px_#7f9fd6]">
          <Fit w={41} className="-mt-[3px] leading-[36px]">
            File
          </Fit>
          <svg width="20" height="13" viewBox="0 0 20 13">
            <path d="M0 0H20L10 13Z" fill="#fff" />
          </svg>
        </div>
        <div className="flex w-[529px] items-start">
          <div className="flex h-[61px] items-center pl-[37px] pt-[11px]">
            <div className="mb-[3px]">
              <ModelIcon />
            </div>
            <Fit w={155} className="ml-[9px] leading-[36px]">
              Model New
            </Fit>
          </div>
          <div className="flex h-[61px] items-center pl-[70px] pt-[11px]">
            <DatabaseIcon />
            <Fit w={123} className="ml-[14px] leading-[36px]">
              Database
            </Fit>
          </div>
        </div>
        <div className="relative z-10 mt-[3px] flex h-[60px] w-[148px] items-center rounded-t-[8px] border-2 border-b-0 border-[#b9c8da] bg-linear-to-b from-[#f3f7fc] to-white pl-[28px]">
          <GlobeIcon />
          <Fit w={46} className="ml-[8px] mt-[5px] leading-[36px]">
            GIS
          </Fit>
        </div>
      </nav>

      <section className="flex h-[228px] shrink-0 overflow-hidden border-2 border-[#b9c8da] bg-linear-to-b from-white via-[#ebf1fa] via-50% to-[#edf2fb]">
        <Group width="w-[948px]" title="Commands" tw={153} pad="pl-[18px]">
          <Big icon={<AddLayersIcon />} nudge="ml-[5px]" width="w-[104px]" lines={[["Add", 55], ["Layers", 83]]} />
          <Big icon={<SaveLayersIcon />} nudge="ml-[3px]" width="ml-[11px] w-[96px]" lines={[["Save", 62], ["Layers", 83]]} />
          <Column width="ml-[9px] w-[260px]">
            <Small icon={<SelectIcon />} text="Select" w={80} />
            <Small icon={<HandIcon />} text="Pan" w={49} active />
            <Small icon={<ZoomLayerIcon />} text="Zoom To Layer" w={197} />
          </Column>
          <Column width="w-[241px]">
            <Small icon={<ZoomInIcon />} text="Zoom In" w={112} />
            <Small icon={<ZoomOutIcon />} text="Zoom Out" w={137} />
            <Small icon={<ZoomExtendIcon />} text="Zoom Extend" w={177} />
          </Column>
          <Column width="w-[200px]">
            <Small icon={<TableInfoIcon />} text="Table Info" w={129} />
            <Small icon={<InfoIcon />} text="Info" w={53} />
          </Column>
        </Group>

        <Group width="w-[493px]" title="Model Management" tw={271} pad="pl-[22px]">
          <Big icon={<CreationIcon />} nudge="ml-[4px]" width="w-[121px]" low lines={[["Creation", 113]]} />
          <Big icon={<EditionIcon />} width="w-[117px]" low lines={[["Edition", 92]]} />
          <Big icon={<SimulationIcon />} width="w-[208px]" lines={[["Simulation and", 200], ["Visualization", 167]]} />
        </Group>

        <Group width="w-[869px]" title="Model Properties" tw={229} pad="pl-[22px]">
          <Big icon={<ParametersIcon />} width="w-[159px]" low lines={[["Parameters", 148]]} />
          <Column width="w-[181px]">
            <Small icon={<ImportPIcon />} text="Import P" w={116} />
            <Small icon={<ExportPIcon />} text="Export P" w={111} />
          </Column>
          <Big icon={<InitialIcon />} nudge="ml-[5px]" width="w-[152px]" lines={[["Initial", 73], ["conditions", 140]]} />
          <Column width="ml-[5px] w-[188px]">
            <Small icon={<ImportICIcon />} text="Import IC" w={126} />
            <Small icon={<ExportICIcon />} text="Export IC" w={121} />
          </Column>
          <Big icon={<ConverterIcon />} width="w-[150px]" low lines={[["Converter", 133]]} />
        </Group>

        <Group width="w-[221px]" title="ToolBox" tw={106} pad="pl-[23px]">
          <Big icon={<StationsIcon />} width="w-[175px]" lines={[["DB Stations", 153], ["Visualization", 167]]} />
        </Group>

        <Group width="w-[145px]" title="Info" tw={53} pad="pl-[26px]">
          <Big icon={<HelpIcon />} width="w-[100px]" lines={[["Help", 63]]} />
        </Group>
      </section>

      <main className="flex min-h-0 flex-1 border-r-[8px] border-[#f0f0f0]">
        <aside className="flex w-[305px] shrink-0 flex-col border-r-[5px] border-[#f0f0f0] pt-px">
          <div className="flex h-[44px] items-center pl-[3px]">
            <Expander />
            <svg width="16" height="13" viewBox="0 0 16 13" className="ml-[30px] block shrink-0">
              <path d="M5 .7H15L11 5H1Z" fill="#ffff00" stroke="#000" />
              <path d="M1 5V7.500H11L15 3M1 7.500V10H11L15 5.500M1 10V12.300H10L15 8" fill="none" stroke="#000" strokeWidth="1.200" />
              <path d="M2 6.300H10.500M2 8.800H10.500M2 11.200H10" stroke="#ffff00" strokeWidth="1.300" />
            </svg>
            <div className="ml-[5px] flex h-[44px] w-[166px] items-center rounded-[2px] border border-[#66b7ea] bg-linear-to-b from-[#ecf7fe] to-[#c2e3fa] pl-[4px]">
              <Fit w={151} className="mt-[3px] leading-[40px]">
                Map Layers
              </Fit>
            </div>
          </div>
          <LayerRow name="15149_rivers" w={160}>
            <div className="h-px w-[17px] bg-[#3a1c22]" />
          </LayerRow>
          <LayerRow name="15149_junctions" w={211}>
            <div className="ml-[12px] size-[5px] rounded-[1px] bg-[#fb9dbb]" />
          </LayerRow>
          <LayerRow name="15149_hru" w={134}>
            <div className="size-[17px] border border-[#0b6459] bg-[#7feedf]" />
          </LayerRow>
        </aside>

        <div className="relative flex-1 overflow-hidden bg-white">
          <BasinMap />
          <div className="absolute left-[19px] top-[1146px] flex font-['Liberation_Sans'] text-[27px] font-bold leading-[32px]">
            <div className="w-[230px]">
              <Fit w={168}>Coordinates:</Fit>
            </div>
            <Fit w={523}>1136061.48672851 ; 4739834.16975769</Fit>
          </div>
        </div>
      </main>

      <footer className="flex h-[64px] shrink-0 flex-col bg-[#f0eceb]">
        <Fit w={351} className="ml-[12px] mt-[14px] h-[48px] self-start leading-[40px]">
          Layer/s loaded succesfully.
        </Fit>
        <div className="flex h-[2px] bg-[#2c313a]">
          <div className="ml-[120px] w-[860px] bg-[#bfbfbf]" />
          <div className="ml-[748px] w-[122px] bg-[#56585c]" />
        </div>
      </footer>
    </div>
  );
}
